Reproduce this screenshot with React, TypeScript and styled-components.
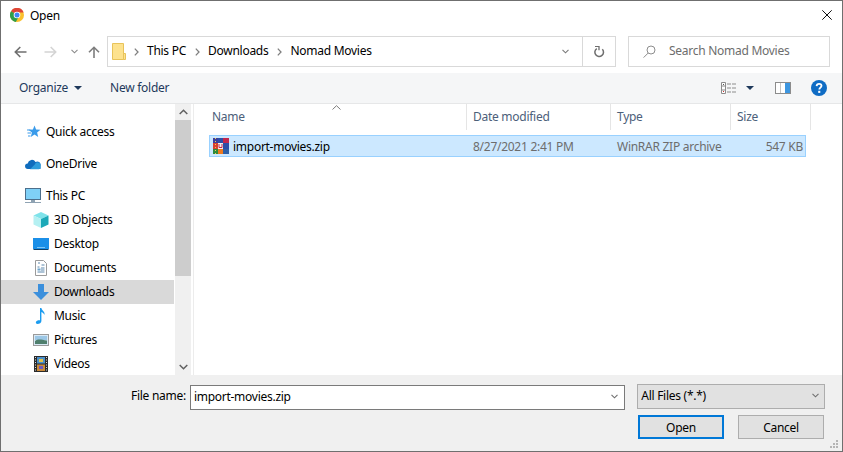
import React from "react";
import styled, { createGlobalStyle } from "styled-components";

const GlobalStyle = createGlobalStyle`
  html, body { margin: 0; padding: 0; background: #fff; }
  * { box-sizing: border-box; }
  svg { display: block; flex: none; }
`;

const Window = styled.div`
  width: 843px;
  height: 452px;
  border: 1px solid #6f6f6f;
  background: #fff;
  display: flex;
  flex-direction: column;
  overflow: hidden;
  font-family: "Noto Sans", "Open Sans", sans-serif;
  font-size: 12px;
  letter-spacing: -0.27px;
  color: #000;
  white-space: nowrap;
`;

// title bar
const TitleBar = styled.div`
  height: 30px;
  flex: none;
  display: flex;
  align-items: center;
  padding: 0 10px 2px 9px;
  gap: 6px;
`;

const TitleText = styled.span`
  flex: 1;
`;

// nav row with address bar
const NavRow = styled.div`
  height: 42px;
  flex: none;
  display: flex;
  align-items: flex-start;
  padding: 5px 12px 0 13px;
`;

const NavButtons = styled.div`
  width: 93px;
  height: 31px;
  display: flex;
  align-items: center;
`;

const NavSlot = styled.div<{ $w: number }>`
  width: ${(p) => p.$w}px;
  flex: none;
  display: flex;
  justify-content: center;
`;

const AddressBar = styled.div`
  width: 509px;
  height: 31px;
  border: 1px solid #d9d9d9;
  display: flex;
  align-items: center;
  padding-left: 4px;
`;

const Crumbs = styled.div`
  flex: 1;
  display: flex;
  align-items: center;
`;

const Crumb = styled.span`
  margin: 0 9px 2px 8px;
`;

const AddressEnd = styled.div`
  width: 33px;
  height: 100%;
  border-left: 1px solid #d9d9d9;
  display: flex;
  align-items: center;
  justify-content: center;
`;

const AddressDrop = styled.div`
  width: 33px;
  display: flex;
  justify-content: center;
`;

const SearchBox = styled.div`
  width: 202px;
  height: 31px;
  margin-left: 12px;
  border: 1px solid #d9d9d9;
  display: flex;
  align-items: center;
  padding-left: 14px;
  gap: 13px;
  color: #6d6d6d;
`;

const SearchText = styled.span`
  margin-bottom: 2px;
`;

// toolbar
const Toolbar = styled.div`
  height: 31px;
  flex: none;
  background: #f5f6f7;
  border-bottom: 1px solid #e6e7e8;
  display: flex;
  align-items: center;
  padding: 0 15px 1px 18px;
  color: #1e395b;
`;

const ToolButton = styled.span`
  display: flex;
  align-items: center;
  gap: 6px;
  margin-right: 28px;
`;

const ToolIcons = styled.div`
  margin-left: auto;
  display: flex;
  align-items: center;
`;

// body
const Body = styled.div`
  flex: 1;
  min-height: 0;
  display: flex;
`;

const Sidebar = styled.nav`
  width: 173px;
  flex: none;
  padding-top: 16px;
  overflow: hidden;
`;

const NavGroup = styled.div`
  margin-bottom: 8px;
`;

const NavItem = styled.div<{ $level?: number; $active?: boolean }>`
  height: 24px;
  display: flex;
  align-items: center;
  gap: 5px;
  padding-left: ${(p) => (p.$level ? 32 : 24)}px;
  background: ${(p) => (p.$active ? "#d9d9d9" : "transparent")};
`;

const NavLabel = styled.span`
  margin-bottom: 2px;
`;

const ScrollBar = styled.div`
  width: 16px;
  flex: none;
  margin-left: 1px;
  background: #f0f0f0;
  display: flex;
  flex-direction: column;
`;

const ScrollArrow = styled.div`
  height: 16px;
  flex: none;
  display: flex;
  align-items: center;
  justify-content: center;
`;

const ScrollThumb = styled.div`
  height: 156px;
  flex: none;
  background: #cdcdcd;
`;

const ScrollTrack = styled.div`
  flex: 1;
`;

const FileArea = styled.section`
  flex: 1;
  min-width: 0;
  border-left: 1px solid #ececec;
  margin-left: 2px;
`;

const HeaderRow = styled.div`
  position: relative;
  height: 26px;
  display: grid;
  grid-template-columns: 273px 144px 120px 80px;
  color: #4c607a;
`;

const HeaderCell = styled.div<{ $first?: boolean }>`
  border-right: 1px solid #e5e5e5;
  padding: 0 0 2px ${(p) => (p.$first ? 18 : 6)}px;
  display: flex;
  align-items: center;
`;

const SortCaret = styled.div`
  position: absolute;
  left: 138px;
  top: 1px;
`;

const FileRow = styled.div`
  width: 597px;
  height: 22px;
  margin: 5px 0 0 15px;
  border: 1px solid #99d1ff;
  background: #cce8ff;
  display: grid;
  grid-template-columns: 256px 144px 120px 75px;
  align-items: center;
  color: #6d6d6d;
`;

const NameCell = styled.div`
  display: flex;
  align-items: center;
  gap: 4px;
  padding-left: 3px;
  color: #000;
`;

const FileCell = styled.div`
  padding-left: 7px;
`;

const SizeCell = styled.div`
  text-align: right;
  padding-right: 2px;
`;

// footer
const Footer = styled.footer`
  position: relative;
  height: 76px;
  flex: none;
  background: #f0f0f0;
  padding: 9px 17px 0 130px;
`;

const FooterRow = styled.div`
  display: flex;
  align-items: flex-start;
`;

const FieldLabel = styled.span`
  width: 59px;
  padding-top: 3px;
`;

const FileInput = styled.div`
  width: 436px;
  height: 25px;
  margin-top: 1px;
  background: #fff;
  border: 1px solid #7a7a7a;
  display: flex;
  align-items: center;
  justify-content: space-between;
  padding: 0 6px 2px 3px;
`;

const FilterSelect = styled.div`
  width: 188px;
  height: 25px;
  margin-left: 12px;
  background: #e1e1e1;
  border: 1px solid #adadad;
  display: flex;
  align-items: center;
  justify-content: space-between;
  padding: 0 5px 2px 3px;
`;

const ButtonRow = styled.div`
  display: flex;
  justify-content: flex-end;
  gap: 14px;
  margin: 5px 1px 0 0;
`;

const DialogButton = styled.button<{ $primary?: boolean }>`
  width: 86px;
  height: 24px;
  padding: 0;
  font: inherit;
  letter-spacing: inherit;
  color: #000;
  background: #e1e1e1;
  border: ${(p) => (p.$primary ? "2px solid #0078d7" : "1px solid #adadad")};
`;

const Grip = styled.div`
  position: absolute;
  right: 3px;
  bottom: 2px;
`;

// icons
const ChromeIcon = () => (
  <svg width="14" height="14" viewBox="0 0 14 14">
    <circle cx="7" cy="7" r="7" fill="#fbc02d" />
    <path d="M7 7 1 3.2A7 7 0 0 1 13.6 4.5H7Z" fill="#de4437" />
    <path d="M7 7 1 3.2A7 7 0 0 0 5.8 13.9L8.6 9Z" fill="#2f9e4a" />
    <circle cx="7" cy="7" r="3.3" fill="#fff" />
    <circle cx="7" cy="7" r="2.5" fill="#4285f4" />
  </svg>
);

const CloseIcon = () => (
  <svg width="10" height="10" viewBox="0 0 10 10">
    <path d="M.3.3l9.4 9.4M9.7.3.3 9.7" stroke="#111" strokeWidth="1" fill="none" />
  </svg>
);

const ArrowLeft = ({ color }: { color: string }) => (
  <svg width="13" height="12" viewBox="0 0 13 12">
    <path d="M12.5 6H1.5M6.3 1 1.3 6l5 5" stroke={color} strokeWidth="1.6" fill="none" />
  </svg>
);

const ArrowRight = ({ color }: { color: string }) => (
  <svg width="13" height="12" viewBox="0 0 13 12">
    <path d="M.5 6h11M6.7 1l5 5-5 5" stroke={color} strokeWidth="1.6" fill="none" />
  </svg>
);

const ArrowUp = () => (
  <svg width="12" height="12" viewBox="0 0 12 12">
    <path d="M6 12V1.5M1 6.3l5-5 5 5" stroke="#7d7d7d" strokeWidth="1.6" fill="none" />
  </svg>
);

const SmallChevron = ({ color = "#8a8a8a", w = 7 }: { color?: string; w?: number }) => (
  <svg width={w} height="5" viewBox="0 0 7 5">
    <path d="M.5.8 3.5 3.8 6.5.8" stroke={color} strokeWidth="1.1" fill="none" />
  </svg>
);

const CrumbArrow = () => (
  <svg width="5" height="8" viewBox="0 0 5 8">
    <path d="M.8.6 4 4 .8 7.4" stroke="#7f7f7f" strokeWidth="1.3" fill="none" />
  </svg>
);

const FolderIcon = () => (
  <svg width="14" height="17" viewBox="0 0 14 17">
    <path d="M.5.5h11v16H.5Z" fill="#fde28e" stroke="#e8c35a" />
    <path d="M11.5 10.5h2v6h-2Z" fill="#fde28e" stroke="#e8c35a" />
  </svg>
);

const RefreshIcon = () => (
  <svg width="11" height="12" viewBox="0 0 11 12">
    <path d="M8.3 3.2A4.3 4.3 0 1 1 2.8 2.6" stroke="#6f6f6f" strokeWidth="1.5" fill="none" />
    <path d="M1 .3h4v4" stroke="#6f6f6f" strokeWidth="1.3" fill="none" />
  </svg>
);

const SearchIcon = () => (
  <svg width="13" height="13" viewBox="0 0 13 13">
    <circle cx="8" cy="5" r="4" stroke="#8d8d8d" fill="none" />
    <path d="M5.2 8 .6 12.6" stroke="#8d8d8d" fill="none" />
  </svg>
);

const Caret = ({ color = "#1e395b" }: { color?: string }) => (
  <svg width="8" height="4" viewBox="0 0 8 4">
    <path d="M0 0h8L4 4Z" fill={color} />
  </svg>
);

const ViewIcon = () => (
  <svg width="16" height="12" viewBox="0 0 16 12">
    <path d="M.5.5h4v11h-4Z" fill="#fff" stroke="#8c8c8c" />
    <path d="M.5 4h4M.5 8h4" stroke="#8c8c8c" />
    <path d="M6 2h4M11 2h4M6 6h4M11 6h4M6 10h4M11 10h4" stroke="#8c8c8c" />
    <rect x="2" y="2" width="1" height="1" fill="#555" />
    <rect x="2" y="9" width="1" height="1" fill="#c33" />
  </svg>
);

const PaneIcon = () => (
  <svg width="16" height="12" viewBox="0 0 16 12">
    <rect x=".5" y=".5" width="15" height="11" fill="#fff" stroke="#8c8c8c" />
    <rect x="10" y="1" width="5" height="10" fill="#3d96e0" />
    <path d="M5.5 1v10" stroke="#c4c4c4" />
  </svg>
);

const HelpIcon = () => (
  <svg width="16" height="16" viewBox="0 0 16 16">
    <circle cx="8" cy="8" r="8" fill="#0f6cc4" />
    <path d="M5.6 6.1C5.7 4.6 6.7 3.8 8.1 3.8c1.4 0 2.4.8 2.4 2 0 1.800-2.200 1.900-2.200 3.700" stroke="#fff" strokeWidth="1.8" fill="none" />
    <rect x="7.200" y="10.800" width="2.100" height="2.100" fill="#fff" />
  </svg>
);

const StarIcon = () => (
  <svg width="16" height="16" viewBox="0 0 16 16">
    <path d="M9.500 1.500l1.600 4 4.400.3-3.400 2.800 1.100 4.300-3.700-2.400-3.700 2.400 1.100-4.300L3.500 5.800l4.400-.3Z" fill="#3a9bea" />
    <path d="M2 6h3.500M2.500 9H6M3 12h2.500" stroke="#3a9bea" />
  </svg>
);

const CloudIcon = () => (
  <svg width="16" height="16" viewBox="0 0 16 16">
    <path d="M3 13a2.800 2.800 0 0 1-.3-5.600A4.200 4.200 0 0 1 10.500 6a3.300 3.300 0 0 1 5 3.500V13Z" fill="#0f6cbd" />
    <path d="M5 13.200 9.800 8.500a3 3 0 0 1 5.700 1.900c.5 1.500-.4 2.800-1.800 2.800Z" fill="#2d9cdb" />
  </svg>
);

const MonitorIcon = () => (
  <svg width="16" height="16" viewBox="0 0 16 16">
    <rect x=".5" y=".5" width="15" height="11" fill="#7fd0f7" stroke="#4d6f8c" />
    <rect x="6" y="12" width="4" height="2" fill="#8fa3b3" />
    <path d="M0 14.500h16" stroke="#8fa3b3" />
  </svg>
);

const CubeIcon = () => (
  <svg width="16" height="16" viewBox="0 0 16 16">
    <path d="M8 0 15.500 3.500 8 7 .5 3.500Z" fill="#7fe3ea" />
    <path d="M.5 3.500 8 7v9L.5 12.500Z" fill="#b5f0f2" />
    <path d="M15.500 3.500 8 7v9l7.500-3.500Z" fill="#1ba9b8" />
  </svg>
);

const DesktopIcon = () => (
  <svg width="16" height="16" viewBox="0 0 16 16">
    <rect x="0" y="2" width="16" height="11" fill="#1b8fe8" />
    <path d="M.5 13.500h15" stroke="#123f66" />
    <path d="M4 11.500h8" stroke="#7fc6f5" />
  </svg>
);

const DocIcon = () => (
  <svg width="16" height="16" viewBox="0 0 16 16">
    <path d="M2.500.5h8l3 3v12h-11Z" fill="#fff" stroke="#9b9b9b" />
    <path d="M5 3h2M8.500 5h3M4.500 7h2M8 8h3.500M8 10h3.500M4.500 12h7" stroke="#5d88ad" />
    <rect x="4.500" y="8.500" width="3" height="2" fill="#6ba3cc" />
  </svg>
);

const DownloadIcon = () => (
  <svg width="16" height="16" viewBox="0 0 16 16">
    <path d="M5 0h6v8h5l-8 8-8-8h5Z" fill="#3b8fdc" />
  </svg>
);

const MusicIcon = () => (
  <svg width="16" height="16" viewBox="0 0 16 16">
    <path d="M7 0h1.400c.4 2.500 4 3.500 3 7-.5-1.500-1.500-2.500-3-3v9c0 2-2 3-3.900 3C3.200 16 2.500 15 3 13.800 3.600 12.500 5.500 11.800 7 12.300Z" fill="#1b9cf0" />
  </svg>
);

const PictureIcon = () => (
  <svg width="16" height="12" viewBox="0 0 16 12">
    <rect x=".5" y=".5" width="15" height="11" fill="#d9e9f5" stroke="#9a9a9a" />
    <rect x="2" y="2" width="12" height="4" fill="#9cc7e6" />
    <path d="M2 7c3-2.500 6-1.500 12-.5V10H2Z" fill="#4f7f6d" />
  </svg>
);

const FilmIcon = () => (
  <svg width="16" height="16" viewBox="0 0 16 16">
    <rect x="1" y="0" width="14" height="16" fill="#2b2b2b" />
    <rect x="4" y="1" width="8" height="6.500" fill="#4a8fc9" />
    <rect x="4" y="8.500" width="8" height="6.500" fill="#c98a3a" />
    <path d="M6 3h4v3H6Z" fill="#e2c34a" />
    <path d="M6 10h4v3H6Z" fill="#6a5ac2" />
    <path d="M2.500 1v14M13.500 1v14" stroke="#ddd" strokeDasharray="1 1.500" />
  </svg>
);

const RarIcon = () => (
  <svg width="16" height="16" viewBox="0 0 16 16">
    <rect x="0" y="0" width="5" height="5" fill="#3c3f9e" />
    <rect x="5" y="0" width="5" height="5" fill="#2c4fa8" />
    <rect x="10" y="0" width="6" height="5" fill="#c2274e" />
    <rect x="0" y="5" width="5" height="6" fill="#d8402f" />
    <rect x="5" y="5" width="5" height="6" fill="#f4f0ec" />
    <rect x="10" y="5" width="6" height="6" fill="#2c4fa8" />
    <rect x="0" y="11" width="5" height="5" fill="#2e8b3d" />
    <rect x="5" y="11" width="5" height="5" fill="#ee7a1f" />
    <rect x="10" y="11" width="6" height="5" fill="#2b5fa8" />
    <path d="M6 6v3.500h3V6" stroke="#c2274e" fill="none" />
    <path d="M2.500 0v16" stroke="#f2d04b" strokeDasharray="1 2" />
  </svg>
);

const GripIcon = () => (
  <svg width="9" height="9" viewBox="0 0 9 9" fill="#b5b5b5">
    <rect x="6" y="0" width="2" height="2" />
    <rect x="3" y="3" width="2" height="2" />
    <rect x="6" y="3" width="2" height="2" />
    <rect x="0" y="6" width="2" height="2" />
    <rect x="3" y="6" width="2" height="2" />
    <rect x="6" y="6" width="2" height="2" />
  </svg>
);

const navGroups = [
  [{ label: "Quick access", icon: <StarIcon /> }],
  [{ label: "OneDrive", icon: <CloudIcon /> }],
  [
    { label: "This PC", icon: <MonitorIcon /> },
    { label: "3D Objects", icon: <CubeIcon />, level: 1 },
    { label: "Desktop", icon: <DesktopIcon />, level: 1 },
    { label: "Documents", icon: <DocIcon />, level: 1 },
    { label: "Downloads", icon: <DownloadIcon />, level: 1, active: true },
    { label: "Music", icon: <MusicIcon />, level: 1 },
    { label: "Pictures", icon: <PictureIcon />, level: 1 },
    { label: "Videos", icon: <FilmIcon />, level: 1 },
  ],
];

const App: React.FC = () => {
  return (
    <Window>
      <GlobalStyle />
      <TitleBar>
        <ChromeIcon />
        <TitleText>Open</TitleText>
        <CloseIcon />
      </TitleBar>

      <NavRow>
        <NavButtons>
          <NavSlot $w={13}>
            <ArrowLeft color="#6f6f6f" />
          </NavSlot>
          <NavSlot $w={17} />
          <NavSlot $w={13}>
            <ArrowRight color="#d4d4d4" />
          </NavSlot>
          <NavSlot $w={14} />
          <NavSlot $w={7}>
            <SmallChevron />
          </NavSlot>
          <NavSlot $w={10} />
          <NavSlot $w={12}>
            <ArrowUp />
          </NavSlot>
        </NavButtons>
        <AddressBar>
          <FolderIcon />
          <Crumbs>
            <NavSlot $w={8} />
            <CrumbArrow />
            <Crumb>This PC</Crumb>
            <CrumbArrow />
            <Crumb>Downloads</Crumb>
            <CrumbArrow />
            <Crumb>Nomad Movies</Crumb>
          </Crumbs>
          <AddressDrop>
            <SmallChevron color="#7a7a7a" w={9} />
          </AddressDrop>
          <AddressEnd>
            <RefreshIcon />
          </AddressEnd>
        </AddressBar>
        <SearchBox>
          <SearchIcon />
          <SearchText>Search Nomad Movies</SearchText>
        </SearchBox>
      </NavRow>

      <Toolbar>
        <ToolButton>
          Organize <Caret />
        </ToolButton>
        <ToolButton>New folder</ToolButton>
        <ToolIcons>
          <ViewIcon />
          <NavSlot $w={9} />
          <Caret />
          <NavSlot $w={21} />
          <PaneIcon />
          <NavSlot $w={20} />
          <HelpIcon />
        </ToolIcons>
      </Toolbar>

      <Body>
        <Sidebar>
          {navGroups.map((group) => (
            <NavGroup key={group[0].label}>
              {group.map((item) => (
                <NavItem key={item.label} $level={item.level} $active={item.active}>
                  {item.icon}
                  <NavLabel>{item.label}</NavLabel>
                </NavItem>
              ))}
            </NavGroup>
          ))}
        </Sidebar>
        <ScrollBar>
          <ScrollArrow>
            <svg width="9" height="6" viewBox="0 0 9 6">
              <path d="M.7 5 4.500 1.200 8.300 5" stroke="#606060" strokeWidth="1.500" fill="none" />
            </svg>
          </ScrollArrow>
          <ScrollThumb />
          <ScrollTrack />
          <ScrollArrow>
            <svg width="9" height="6" viewBox="0 0 9 6">
              <path d="M.7 1 4.500 4.800 8.300 1" stroke="#606060" strokeWidth="1.500" fill="none" />
            </svg>
          </ScrollArrow>
        </ScrollBar>
        <FileArea>
          <HeaderRow>
            <SortCaret>
              <svg width="9" height="5" viewBox="0 0 9 5">
                <path d="M.5 4.500 4.500.7 8.500 4.500" stroke="#7b7b7b" fill="none" />
              </svg>
            </SortCaret>
            <HeaderCell $first>Name</HeaderCell>
            <HeaderCell>Date modified</HeaderCell>
            <HeaderCell>Type</HeaderCell>
            <HeaderCell>Size</HeaderCell>
          </HeaderRow>
          <FileRow>
            <NameCell>
              <RarIcon />
              import-movies.zip
            </NameCell>
            <FileCell>8/27/2021 2:41 PM</FileCell>
            <FileCell>WinRAR ZIP archive</FileCell>
            <SizeCell>547 KB</SizeCell>
          </FileRow>
        </FileArea>
      </Body>

      <Footer>
        <FooterRow>
          <FieldLabel>File name:</FieldLabel>
          <FileInput>
            import-movies.zip
            <SmallChevron color="#6f6f6f" />
          </FileInput>
          <FilterSelect>
            All Files (*.*)
            <SmallChevron color="#6f6f6f" />
          </FilterSelect>
        </FooterRow>
        <ButtonRow>
          <DialogButton $primary>Open</DialogButton>
          <DialogButton>Cancel</DialogButton>
        </ButtonRow>
        <Grip>
          <GripIcon />
        </Grip>
      </Footer>
    </Window>
  );
};

export default App;
